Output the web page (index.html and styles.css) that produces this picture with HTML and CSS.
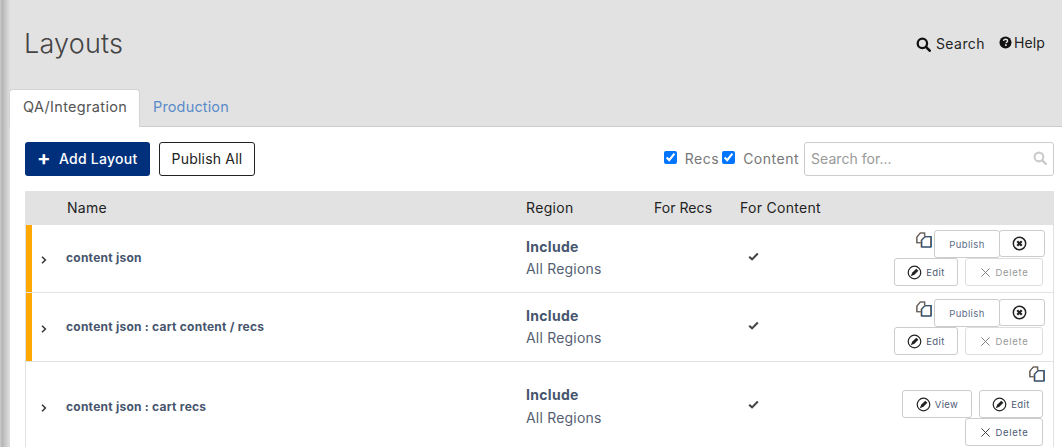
FILE: index.html
```html
<!DOCTYPE html>
<html lang="en">
<head>
<meta charset="utf-8">
<title>Layouts</title>
<link rel="stylesheet" href="styles.css">
</head>
<body>
<svg class="defs" width="0" height="0" aria-hidden="true">
  <symbol id="i-search" viewBox="0 0 16 16"><circle cx="6.8" cy="6.8" r="5" fill="none" stroke="currentColor" stroke-width="2.4"/><path d="M10.6 10.6 14.6 14.6" stroke="currentColor" stroke-width="2.8" stroke-linecap="round"/></symbol>
  <symbol id="i-pencil" viewBox="0 0 16 16"><circle cx="8" cy="8" r="6.7" fill="none" stroke="currentColor" stroke-width="1.3"/><path d="M9.9 3.9 12.1 6.1 7.9 10.3 4 12 5.7 8.1Z" fill="currentColor"/></symbol>
  <symbol id="i-times" viewBox="0 0 16 16"><circle cx="8" cy="8" r="6.6" fill="none" stroke="currentColor" stroke-width="1.6"/><path d="M5.6 5.6 10.4 10.4M10.4 5.6 5.6 10.4" stroke="currentColor" stroke-width="2.4"/></symbol>
  <symbol id="i-x" viewBox="0 0 12 12"><path d="M1.5 1.5 10.5 10.5M10.5 1.5 1.5 10.5" stroke="currentColor" stroke-width="1" fill="none"/></symbol>
  <symbol id="i-copy" viewBox="0 0 16 16">
    <path d="M5.5 10.8H1V5.2L4.4 1H8.8V4" fill="none" stroke="#c4813f" stroke-width="1.1" transform="translate(-.4 0)"/>
    <path d="M5.5 10.8H1V5.2L4.4 1H8.8V4" fill="none" stroke="#4a5a70" stroke-width="1.1"/>
    <path d="M5.5 15V8.2L9 4.6H15V15Z" fill="#fff" stroke="#c4813f" stroke-width="1.1" transform="translate(-.4 0)"/>
    <path d="M5.5 15V8.2L9 4.6H15V15Z" fill="none" stroke="#2f7ac4" stroke-width="1.1" transform="translate(.4 0)"/>
    <path d="M5.5 15V8.2L9 4.6H15V15Z" fill="none" stroke="#3a4a60" stroke-width=".9"/>
  </symbol>
  <symbol id="i-check" viewBox="0 0 12 10"><path d="M1.2 5.2 4.4 8.2 10.8 1.6" fill="none" stroke="currentColor" stroke-width="2.3"/></symbol>
  <symbol id="i-chev" viewBox="0 0 6 8"><path d="M1 .8 4.4 4 1 7.2" fill="none" stroke="currentColor" stroke-width="1.5"/></symbol>
</svg>
<div class="page">
  <header class="topbar">
    <h1 class="title">Layouts</h1>
    <nav class="toplinks">
      <a class="toplink search-link"><svg class="ico-search"><use href="#i-search"/></svg>Search</a>
      <a class="toplink help-link"><svg class="ico-help" viewBox="0 0 16 16"><circle cx="8" cy="8" r="7.4" fill="currentColor"/><path d="M5.6 6.2C5.7 4.7 6.8 4 8.1 4 9.5 4 10.5 4.8 10.5 6 10.5 7.6 8.6 7.6 8.6 9" fill="none" stroke="#e2e2e2" stroke-width="1.7"/><rect x="7.3" y="10.2" width="2.2" height="2" fill="#e2e2e2"/></svg>Help</a>
    </nav>
  </header>
  <div class="tabs">
    <a class="tab active">QA/Integration</a>
    <a class="tab">Production</a>
  </div>
  <main class="panel">
    <div class="toolbar">
      <button class="btn-primary"><span class="plus">+</span>Add Layout</button>
      <button class="btn-outline">Publish All</button>
      <div class="filters">
        <label class="filter"><input type="checkbox" checked>Recs</label>
        <label class="filter"><input type="checkbox" checked>Content</label>
        <div class="searchbox"><span class="placeholder">Search for...</span><svg class="ico-search-in"><use href="#i-search"/></svg></div>
      </div>
    </div>
    <div class="table">
      <div class="thead">
        <div class="th c-name">Name</div>
        <div class="th c-region">Region</div>
        <div class="th c-recs">For Recs</div>
        <div class="th c-content">For Content</div>
      </div>

      <div class="row flagged">
        <div class="c-toggle"><svg class="chev"><use href="#i-chev"/></svg></div>
        <div class="name">content json</div>
        <div class="region"><b>Include</b><span>All Regions</span></div>
        <div class="recs"></div>
        <div class="content"><svg class="check"><use href="#i-check"/></svg></div>
        <div class="actions">
          <div class="act-line">
            <svg class="copy"><use href="#i-copy"/></svg>
            <button class="btn publish">Publish</button>
            <button class="btn cancel"><svg class="ico16"><use href="#i-times"/></svg></button>
          </div>
          <div class="act-line tight">
            <button class="btn edit"><svg class="ico16"><use href="#i-pencil"/></svg>Edit</button>
            <button class="btn del disabled"><svg class="ico12"><use href="#i-x"/></svg>Delete</button>
          </div>
        </div>
      </div>

      <div class="row flagged">
        <div class="c-toggle"><svg class="chev"><use href="#i-chev"/></svg></div>
        <div class="name">content json : cart content / recs</div>
        <div class="region"><b>Include</b><span>All Regions</span></div>
        <div class="recs"></div>
        <div class="content"><svg class="check"><use href="#i-check"/></svg></div>
        <div class="actions">
          <div class="act-line">
            <svg class="copy"><use href="#i-copy"/></svg>
            <button class="btn publish">Publish</button>
            <button class="btn cancel"><svg class="ico16"><use href="#i-times"/></svg></button>
          </div>
          <div class="act-line tight">
            <button class="btn edit"><svg class="ico16"><use href="#i-pencil"/></svg>Edit</button>
            <button class="btn del disabled"><svg class="ico12"><use href="#i-x"/></svg>Delete</button>
          </div>
        </div>
      </div>

      <div class="row tall">
        <div class="c-toggle"><svg class="chev"><use href="#i-chev"/></svg></div>
        <div class="name">content json : cart recs</div>
        <div class="region"><b>Include</b><span>All Regions</span></div>
        <div class="recs"></div>
        <div class="content"><svg class="check"><use href="#i-check"/></svg></div>
        <div class="actions">
          <div class="act-line copy-line"><svg class="copy"><use href="#i-copy"/></svg></div>
          <div class="act-line tight">
            <button class="btn view"><svg class="ico16"><use href="#i-pencil"/></svg>View</button>
            <button class="btn edit"><svg class="ico16"><use href="#i-pencil"/></svg>Edit</button>
          </div>
          <div class="act-line tight">
            <button class="btn del"><svg class="ico12"><use href="#i-x"/></svg>Delete</button>
          </div>
        </div>
      </div>
    </div>
  </main>
</div>
</body>
</html>
```
FILE: styles.css
```css
* { box-sizing: border-box; }
html, body { margin: 0; padding: 0; height: 447px; overflow: hidden; }
body {
  font-family: Inter, "Liberation Sans", sans-serif;
  background: #e2e2e2;
  color: #333;
}
.defs { position: absolute; }
.page {
  height: 447px;
  overflow: hidden;
  padding-left: 10px;
  background: linear-gradient(90deg, #cfcfcf 0, #b4b4b4 2px, #c6c6c6 5px, #dedede 9.5px);
  display: flex;
  flex-direction: column;
}
.topbar {
  height: 89px;
  padding: 27px 17px 0 14px;
  display: flex;
  justify-content: space-between;
  align-items: flex-start;
  background: #e2e2e2;
}
.title { margin: 0; font-size: 27px; font-weight: 300; line-height: 34px; color: #444; letter-spacing: .2px; }
.toplinks { display: flex; padding-top: 7px; color: #222; }
.toplink { display: flex; align-items: center; font-size: 14px; line-height: 20px; letter-spacing: .1px; }
.search-link { margin-right: 14px; letter-spacing: .45px; }
.ico-search { width: 15px; height: 15px; margin-right: 5px; margin-left: -2px; color: #111; }
.ico-help { width: 13px; height: 13px; margin-right: 2px; margin-bottom: 2px; color: #111; }
.help-link { position: relative; top: -1px; }

.tabs { height: 38px; display: flex; background: #e2e2e2; border-bottom: 1px solid #ccc; }
.tab { padding: 8px 12px 0 13px; height: 37px; font-size: 14.5px; line-height: 20px; color: #5a8bc9; letter-spacing: .15px; }
.tab.active {
  width: 131px;
  margin-left: -1px;
  padding-top: 7px;
  background: #fff;
  color: #555;
  border: 1px solid #d4d4d4;
  border-bottom: 0;
  border-radius: 4px 4px 0 0;
  position: relative;
  z-index: 1;
  height: 38px;
  letter-spacing: .32px;
}
.panel { flex: 1; background: #fff; padding: 15px 8px 0 15px; min-height: 0; }

.toolbar { display: flex; align-items: center; height: 34px; margin-bottom: 15px; }
.btn-primary {
  width: 125px; height: 34px; border: 0; border-radius: 3px;
  background: #00307c; color: #fff;
  font: 500 14px Inter, sans-serif; letter-spacing: .25px;
  display: flex; align-items: center; padding: 0 0 2px 12px;
}
.plus { font-size: 20px; font-weight: 700; line-height: 20px; width: 22px; text-align: left; }
.btn-outline {
  width: 96px; height: 34px; margin-left: 9px; padding-bottom: 2px;
  background: #fff; color: #222; border: 1px solid #222; border-radius: 3px;
  font: 400 14px Inter, sans-serif; letter-spacing: .2px;
}
.filters { margin-left: auto; display: flex; align-items: center; }
.filter { display: flex; align-items: center; font-size: 14px; color: #777; letter-spacing: .5px; padding-bottom: 1px; }
.filter input { margin: 0 8px 3px 0; width: 13px; height: 13px; accent-color: #0075ff; }
.filter + .filter { margin-left: 3px; }
.searchbox {
  width: 250px; height: 34px; margin-left: 5px;
  border: 1px solid #ccc; border-radius: 3px;
  display: flex; align-items: center; justify-content: space-between; padding: 0 6px 2px 6px;
}
.placeholder { font-size: 14px; color: #999; letter-spacing: .05px; }
.ico-search-in { width: 14px; height: 14px; color: #ccc; }

.table { border-right: 1px solid #e2e2e2; border-left: 1px solid #e2e2e2; }
.thead {
  height: 34px; background: #e2e2e2; border-radius: 2px 2px 0 0;
  display: grid; grid-template-columns: 500px 129px 86px 1fr; align-items: center;
  margin-left: -1px; margin-right: -1px;
}
.th { font-size: 14px; color: #222; letter-spacing: .25px; padding-bottom: 2px; }
.c-name { padding-left: 42px; }
.c-region { padding-left: 1px; letter-spacing: .35px; }
.c-recs { letter-spacing: .05px; }
.c-content { letter-spacing: .3px; }

.row {
  display: grid;
  grid-template-columns: 40px 459px 129px 86px 80px 1fr;
  height: 68px;
  border-bottom: 1px solid #e2e2e2;
  align-items: center;
}
.row.flagged { box-shadow: inset 6px 0 0 #ffa800; }
.row + .row { height: 69px; padding-top: 1px; }
.row.tall { height: 90px; padding-top: 0; }
.c-toggle { padding-left: 15px; display: flex; }
.chev { width: 6px; height: 8px; color: #333; margin-top: 2px; }
.name { font-size: 12px; font-weight: 700; color: #46556e; letter-spacing: .24px; padding-bottom: 3px; }
.tall .name { padding-bottom: 1px; }
.region { display: flex; flex-direction: column; font-size: 14px; color: #555f72; line-height: 22px; letter-spacing: .2px; padding: 0 0 2px 1px; }
.region b { font-weight: 700; color: #46556e; letter-spacing: .3px; }
.tall .region { padding: 0 0 0 1px; }
.tall .region span { margin-top: 1px; }
.content { padding-left: 8px; display: flex; }
.check { width: 11px; height: 9px; color: #444; margin-bottom: 5px; }

.actions { display: flex; flex-direction: column; align-items: flex-end; padding: 5px 8px 0 0; align-self: start; }
.act-line { display: flex; align-items: flex-start; }
.act-line.tight { padding-right: 2px; }
.copy-line { height: 23px; }
.copy { width: 16px; height: 16px; margin: 2px 2px 0 0; }
.copy-line .copy { margin: -1px 0 0; }
.btn {
  height: 28px; background: #fff; border: 1px solid #ccc; border-radius: 3px;
  font: 400 9.5px Inter, sans-serif; color: #4c5a75; letter-spacing: .4px;
  display: flex; align-items: center; justify-content: center; padding: 0;
}
.publish { width: 66px; color: #5b6c88; }
.cancel { width: 46px; margin-left: -1px; height: 27px; color: #333; padding-right: 6px; }
.edit { width: 64px; }
.view { width: 70px; margin-right: 7px; }
.del { width: 78px; letter-spacing: .7px; }
.edit + .del { margin-left: 7px; }
.disabled { color: #999; border-color: #ddd; }
.ico16 { width: 15px; height: 15px; color: #222; }
.edit .ico16, .view .ico16 { margin-right: 4px; }
.ico12 { width: 11px; height: 11px; margin-right: 5px; color: #333; }
.disabled .ico12 { color: #777; }
```
